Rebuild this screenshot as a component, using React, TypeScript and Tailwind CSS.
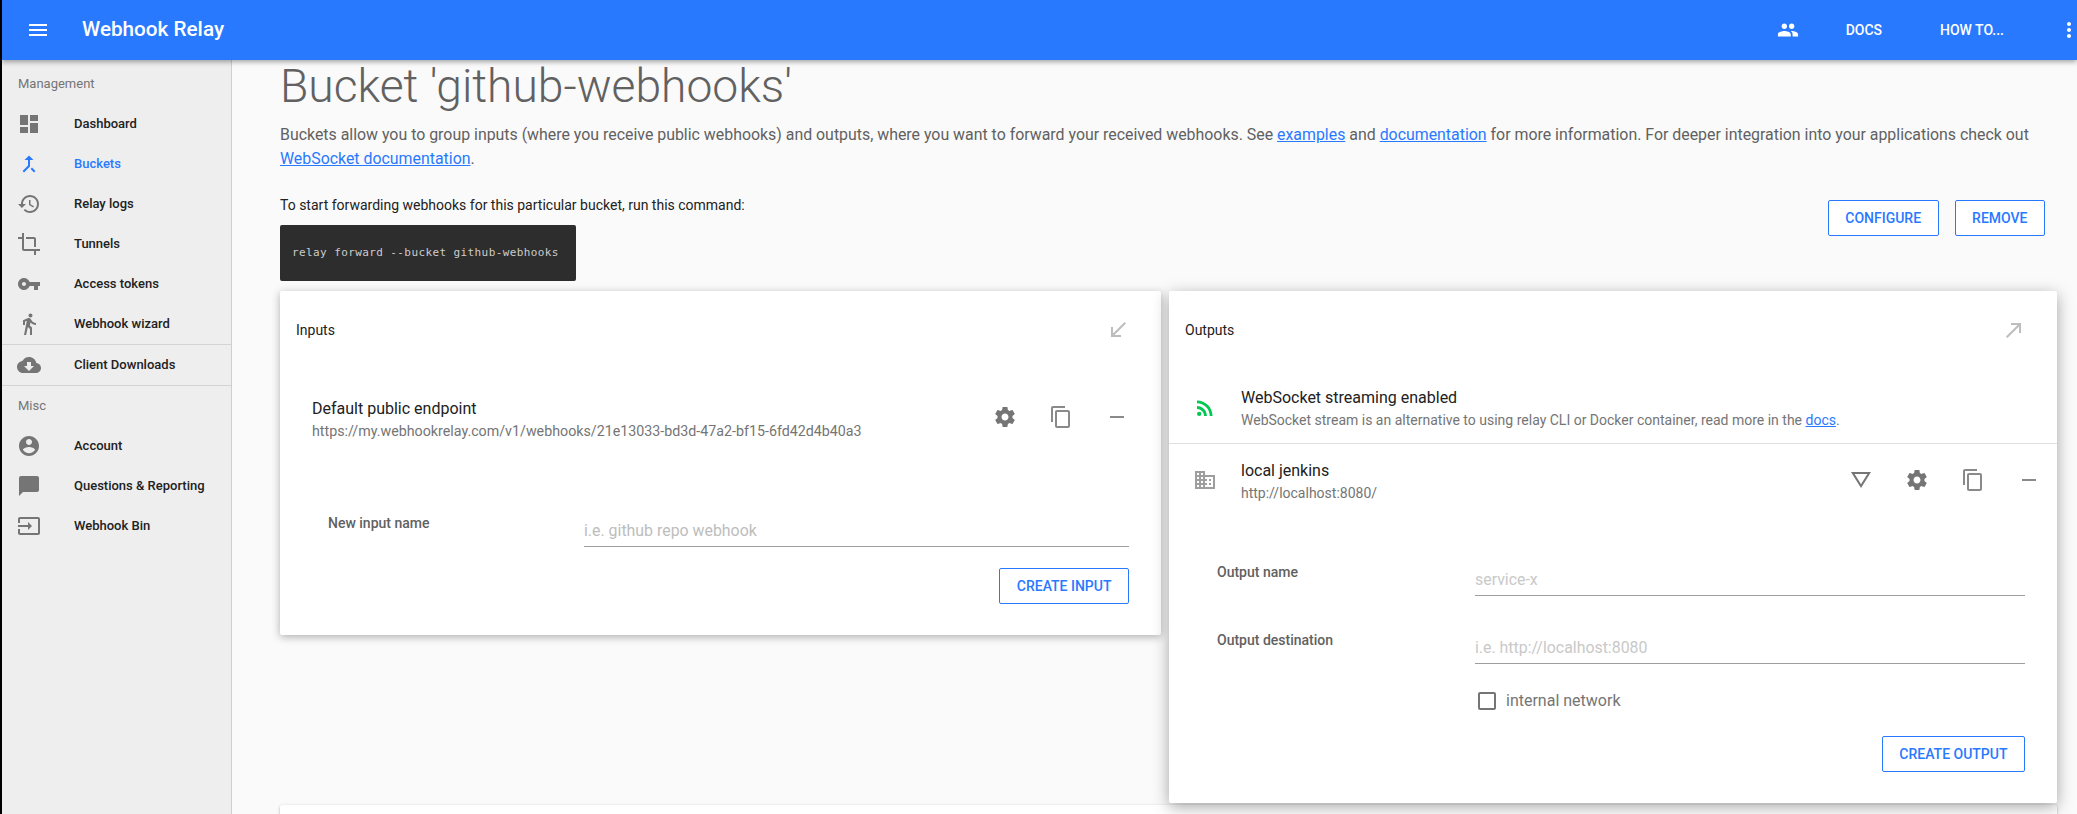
import React from 'react'

const Icon = ({d, className, children}: {d?: string, className?: string, children?: React.ReactNode}) => (
    <svg viewBox="0 0 24 24" fill="currentColor" className={className}>
        {d && <path d={d}/>}
        {children}
    </svg>
)

const paths = {
    menu: "M3 18h18v-2H3v2zm0-5h18v-2H3v2zm0-7v2h18V6H3z",
    dashboard: "M3 13h8V3H3v10zm0 8h8v-6H3v6zm10 0h8V11h-8v10zm0-18v6h8V3h-8z",
    merge: "M17 20.41L18.41 19 15 15.59 13.59 17 17 20.41zM7.5 8H11v5.59L5.59 19 7 20.41l6-6V8h3.5L12 3.5 7.5 8z",
    history: "M13 3c-4.97 0-9 4.03-9 9H1l3.89 3.89.07.14L9 12H6c0-3.87 3.13-7 7-7s7 3.13 7 7-3.13 7-7 7c-1.93 0-3.68-.79-4.94-2.06l-1.42 1.42C8.27 19.99 10.51 21 13 21c4.97 0 9-4.03 9-9s-4.03-9-9-9zm-1 5v5l4.28 2.54.72-1.21-3.5-2.08V8H12z",
    crop: "M17 15h2V7c0-1.1-.9-2-2-2H9v2h8v8zM7 17V1H5v4H1v2h4v10c0 1.1.9 2 2 2h10v4h2v-4h4v-2H7z",
    key: "M12.65 10C11.83 7.67 9.61 6 7 6c-3.31 0-6 2.69-6 6s2.69 6 6 6c2.61 0 4.83-1.67 5.65-4H17v4h4v-4h2v-4H12.65zM7 14c-1.1 0-2-.9-2-2s.9-2 2-2 2 .9 2 2-.9 2-2 2z",
    walk: "M13.5 5.5c1.1 0 2-.9 2-2s-.9-2-2-2-2 .9-2 2 .9 2 2 2zM9.8 8.9L7 23h2.1l1.8-8 2.1 2v6h2v-7.5l-2.1-2 .6-3C14.8 12 16.8 13 19 13v-2c-1.9 0-3.5-1-4.3-2.4l-1-1.6c-.4-.6-1-1-1.7-1-.3 0-.5.1-.8.1L6 8.3V13h2V9.6l1.8-.7",
    cloud: "M19.35 10.04C18.67 6.59 15.64 4 12 4 9.11 4 6.6 5.64 5.35 8.04 2.34 8.36 0 10.91 0 14c0 3.31 2.69 6 6 6h13c2.76 0 5-2.24 5-5 0-2.64-2.05-4.78-4.65-4.96zM17 13l-5 5-5-5h3V9h4v4h3z",
    account: "M12 2C6.48 2 2 6.48 2 12s4.48 10 10 10 10-4.48 10-10S17.52 2 12 2zm0 3c1.66 0 3 1.34 3 3s-1.34 3-3 3-3-1.34-3-3 1.34-3 3-3zm0 14.2c-2.5 0-4.71-1.28-6-3.22.03-1.99 4-3.08 6-3.08 1.99 0 5.97 1.09 6 3.08-1.29 1.94-3.5 3.22-6 3.22z",
    chat: "M20 2H4c-1.1 0-2 .9-2 2v18l4-4h14c1.1 0 2-.9 2-2V4c0-1.1-.9-2-2-2z",
    input: "M21 3.01H3c-1.1 0-2 .9-2 2V9h2V4.99h18v14.03H3V15H1v4.01c0 1.1.9 1.98 2 1.98h18c1.1 0 2-.88 2-1.98v-14c0-1.11-.9-2-2-2zM11 16l4-4-4-4v3H1v2h10v3z",
    people: "M16 11c1.66 0 2.99-1.34 2.99-3S17.66 5 16 5c-1.66 0-3 1.34-3 3s1.34 3 3 3zm-8 0c1.66 0 2.99-1.34 2.99-3S9.66 5 8 5C6.34 5 5 6.34 5 8s1.34 3 3 3zm0 2c-2.33 0-7 1.17-7 3.5V19h14v-2.5c0-2.33-4.67-3.5-7-3.5zm8 0c-.29 0-.62.02-.97.05 1.16.84 1.97 1.97 1.97 3.45V19h6v-2.5c0-2.33-4.67-3.5-7-3.5z",
    more: "M12 8c1.1 0 2-.9 2-2s-.9-2-2-2-2 .9-2 2 .9 2 2 2zm0 2c-1.1 0-2 .9-2 2s.9 2 2 2 2-.9 2-2-.9-2-2-2zm0 6c-1.1 0-2 .9-2 2s.9 2 2 2 2-.9 2-2-.9-2-2-2z",
    settings: "M19.43 12.98c.04-.32.07-.64.07-.98s-.03-.66-.07-.98l2.11-1.65c.19-.15.24-.42.12-.64l-2-3.46c-.12-.22-.39-.3-.61-.22l-2.49 1c-.52-.4-1.08-.73-1.69-.98l-.38-2.65C14.46 2.18 14.25 2 14 2h-4c-.25 0-.46.18-.49.42l-.38 2.65c-.61.25-1.17.59-1.69.98l-2.49-1c-.23-.09-.49 0-.61.22l-2 3.46c-.13.22-.07.49.12.64l2.11 1.65c-.04.32-.07.65-.07.98s.03.66.07.98l-2.11 1.65c-.19.15-.24.42-.12.64l2 3.46c.12.22.39.3.61.22l2.49-1c.52.4 1.08.73 1.69.98l.38 2.65c.03.24.24.42.49.42h4c.25 0 .46-.18.49-.42l.38-2.65c.61-.25 1.17-.59 1.69-.98l2.49 1c.23.09.49 0 .61-.22l2-3.46c.12-.22.07-.49-.12-.64l-2.11-1.65zM12 15.5c-1.93 0-3.5-1.57-3.5-3.5s1.57-3.5 3.5-3.5 3.5 1.57 3.5 3.5-1.57 3.5-3.5 3.5z",
    copy: "M16 1H4c-1.1 0-2 .9-2 2v14h2V3h12V1zm3 4H8c-1.1 0-2 .9-2 2v14c0 1.1.9 2 2 2h11c1.1 0 2-.9 2-2V7c0-1.1-.9-2-2-2zm0 16H8V7h11v14z",
    remove: "M19 13H5v-2h14v2z",
    received: "M20 5.41L18.59 4 7 15.59V9H5v10h10v-2H8.41z",
    made: "M9 5v2h6.59L4 18.59 5.41 20 17 8.41V15h2V5z",
    rss: "M4 4.44v2.83c7.03 0 12.73 5.7 12.73 12.73h2.83c0-8.59-6.97-15.56-15.56-15.56zm0 5.66v2.83c3.9 0 7.07 3.17 7.07 7.07h2.83c0-5.47-4.43-9.9-9.9-9.9z",
    business: "M12 7V3H2v18h20V7H12zM6 19H4v-2h2v2zm0-4H4v-2h2v2zm0-4H4V9h2v2zm0-4H4V5h2v2zm4 12H8v-2h2v2zm0-4H8v-2h2v2zm0-4H8V9h2v2zm0-4H8V5h2v2zm10 12h-8v-2h2v-2h-2v-2h2v-2h-2V9h8v10zm-2-8h-2v2h2v-2zm0 4h-2v2h2v-2z",
    triangle: "M12 7.77L18.39 18H5.61L12 7.77M12 4L2 20h20L12 4z",
    checkbox: "M19 5v14H5V5h14m0-2H5c-1.1 0-2 .9-2 2v14c0 1.1.9 2 2 2h14c1.1 0 2-.9 2-2V5c0-1.1-.9-2-2-2z",
}

const SidebarItem = ({icon, label, active}: {icon: string, label: string, active?: boolean}) => (
    <div className={`flex items-center h-10 pl-[15px] text-[13px] font-medium ${active ? 'text-[#2979ff]' : 'text-[#212121]'}`}>
        <Icon d={icon} className={`w-6 h-6 shrink-0 ${active ? 'text-[#2979ff]' : 'text-[#757575]'}`}/>
        <span className="ml-[33px]">{label}</span>
    </div>
)

const Sidebar = () => (
    <aside className="w-[230px] shrink-0 bg-[#eeeeee] border-r border-[#cfcfcf]">
        <div className="h-11 pt-1 flex items-center pl-4 text-[13px] text-[#757575]">Management</div>
        <SidebarItem icon={paths.dashboard} label="Dashboard"/>
        <SidebarItem icon={paths.merge} label="Buckets" active/>
        <SidebarItem icon={paths.history} label="Relay logs"/>
        <SidebarItem icon={paths.crop} label="Tunnels"/>
        <SidebarItem icon={paths.key} label="Access tokens"/>
        <SidebarItem icon={paths.walk} label="Webhook wizard"/>
        <div className="border-y border-[#d4d4d4]">
            <SidebarItem icon={paths.cloud} label="Client Downloads"/>
        </div>
        <div className="h-10 flex items-center pl-4 text-[13px] text-[#757575]">Misc</div>
        <SidebarItem icon={paths.account} label="Account"/>
        <SidebarItem icon={paths.chat} label="Questions & Reporting"/>
        <SidebarItem icon={paths.input} label="Webhook Bin"/>
    </aside>
)

const OutlineButton = ({children}: {children: React.ReactNode}) => (
    <button className="h-9 px-[16.5px] rounded-[2px] border border-[#2979ff] bg-white text-[#2979ff] text-sm font-medium">
        {children}
    </button>
)

const RowActions = () => (
    <>
        <Icon d={paths.settings} className="w-6 h-6 text-[#757575]"/>
        <Icon d={paths.copy} className="w-6 h-6 text-[#8a8a8a]"/>
        <Icon d={paths.remove} className="w-6 h-6 text-[#8a8a8a]"/>
    </>
)

const Field = ({label, placeholder, labelWidth, color}: {label: string, placeholder: string, labelWidth: string, color: string}) => (
    <div className="flex items-start">
        <div className={`${labelWidth} text-sm leading-5 font-medium text-[#616161]`}>{label}</div>
        <div className={`flex-1 h-[31px] mt-[3px] border-b border-[#9e9e9e] text-[15.9px] leading-[30px] ${color}`}>{placeholder}</div>
    </div>
)

const InputsCard = () => (
    <section className="w-[881px] h-[344px] shrink-0 rounded-[2px] bg-white shadow-[0_2px_8px_rgba(0,0,0,0.3)]">
        <div className="flex items-center justify-between h-[78px] pl-4 pr-[31px] text-sm text-[#212121]">
            <span>Inputs</span>
            <Icon d={paths.received} className="w-6 h-6 text-[#bdbdbd]"/>
        </div>
        <div className="flex items-center mt-[28px] pl-8 pr-[32px]">
            <div className="flex-1">
                <div className="text-base leading-6 text-[#212121]">Default public endpoint</div>
                <div className="text-[14.25px] leading-5 text-[#757575]">https://my.webhookrelay.com/v1/webhooks/21e13033-bd3d-47a2-bf15-6fd42d4b40a3</div>
            </div>
            <div className="flex gap-8 -mt-1">
                <RowActions/>
            </div>
        </div>
        <div className="mt-[72px] pl-[48px] pr-8">
            <Field label="New input name" placeholder="i.e. github repo webhook" labelWidth="w-[256px]" color="text-[#bdbdbd]"/>
            <div className="flex justify-end mt-[21px]">
                <OutlineButton>CREATE INPUT</OutlineButton>
            </div>
        </div>
    </section>
)

const OutputsCard = () => (
    <section className="w-[888px] h-[512px] shrink-0 rounded-[2px] bg-white shadow-[0_4px_16px_rgba(0,0,0,0.35)]">
        <div className="flex items-center justify-between h-[78px] pl-4 pr-[31px] text-sm text-[#212121]">
            <span>Outputs</span>
            <Icon d={paths.made} className="w-6 h-6 text-[#bdbdbd]"/>
        </div>
        <div className="flex items-center h-[75px] pl-6 border-b border-[#e0e0e0]">
            <Icon className="w-6 h-6 mt-1 text-[#00c853]">
                <circle cx="6.18" cy="17.82" r="2.18"/>
                <path d={paths.rss}/>
            </Icon>
            <div className="ml-6 mt-1">
                <div className="text-base leading-6 text-[#212121]">WebSocket streaming enabled</div>
                <div className="text-[14px] leading-5 text-[#757575]">
                    WebSocket stream is an alternative to using relay CLI or Docker container, read more in the <a className="text-[#2979ff] underline">docs</a>.
                </div>
            </div>
        </div>
        <div className="flex items-center h-[72px] pl-6 pr-4">
            <Icon d={paths.business} className="w-6 h-6 text-[#9e9e9e]"/>
            <div className="flex-1 ml-6 mt-[2px]">
                <div className="text-base leading-6 text-[#212121]">local jenkins</div>
                <div className="text-sm leading-5 text-[#757575]">http://localhost:8080/</div>
            </div>
            <div className="flex gap-8">
                <Icon d={paths.triangle} className="w-6 h-6 rotate-180 text-[#757575]"/>
                <RowActions/>
            </div>
        </div>
        <div className="mt-[46px] pl-12 pr-8">
            <Field label="Output name" placeholder="service-x" labelWidth="w-[258px]" color="text-[#c9c9c9]"/>
            <div className="mt-[34px]">
                <Field label="Output destination" placeholder="i.e. http://localhost:8080" labelWidth="w-[258px]" color="text-[#c9c9c9]"/>
            </div>
            <div className="flex items-center ml-[258px] mt-[25px] text-base text-[#757575]">
                <Icon d={paths.checkbox} className="w-6 h-6 text-[#757575]"/>
                <span className="ml-[7px]">internal network</span>
            </div>
            <div className="flex justify-end mt-[23px]">
                <OutlineButton>CREATE OUTPUT</OutlineButton>
            </div>
        </div>
    </section>
)

const App = () => {
    return (
        <div className="flex h-screen overflow-hidden bg-black font-['Roboto',sans-serif]">
            <div className="w-[2px] shrink-0"/>
            <div className="flex-1 min-w-0 flex flex-col">
                <header className="relative z-10 h-[60px] shrink-0 flex items-center bg-[#2979ff] text-white shadow-[0_2px_5px_rgba(0,0,0,0.35)]">
                    <Icon d={paths.menu} className="w-6 h-6 ml-6"/>
                    <span className="ml-8 text-[20.7px] font-medium">Webhook Relay</span>
                    <div className="ml-auto flex items-center text-sm font-medium -mr-1">
                        <Icon d={paths.people} className="w-[22px] h-[22px]"/>
                        <span className="ml-[47px]">DOCS</span>
                        <span className="ml-[58px]">HOW TO...</span>
                        <Icon d={paths.more} className="w-6 h-6 ml-[53px]"/>
                    </div>
                </header>
                <div className="flex-1 min-h-0 flex">
                    <Sidebar/>
                    <main className="flex-1 min-w-0 pl-12 pr-[20px] bg-[#fafafa]">
                        <h1 className="text-[46.2px] leading-[52px] font-light text-[#616161]">Bucket 'github-webhooks'</h1>
                        <p className="mt-[11px] text-[15.9px] leading-6 text-[#616161]">
                            Buckets allow you to group inputs (where you receive public webhooks) and outputs, where you want to forward your received webhooks. See <a className="text-[#2979ff] underline">examples</a> and <a className="text-[#2979ff] underline">documentation</a> for more information. For deeper integration into your applications check out <a className="text-[#2979ff] underline">WebSocket documentation</a>.
                        </p>
                        <div className="flex justify-between mt-6">
                            <div>
                                <div className="text-sm leading-5 text-[#212121]">To start forwarding webhooks for this particular bucket, run this command:</div>
                                <pre className="w-[296px] h-[56px] mt-[10px] rounded-[2px] bg-[#2d2d2d] pl-3 leading-[56px] text-[11px] tracking-[0.4px] text-[#cccccc] font-['DejaVu_Sans_Mono',monospace]">relay forward --bucket github-webhooks</pre>
                            </div>
                            <div className="flex gap-4 pr-3 mt-[5px] h-9">
                                <OutlineButton>CONFIGURE</OutlineButton>
                                <OutlineButton>REMOVE</OutlineButton>
                            </div>
                        </div>
                        <div className="flex items-start gap-2 mt-[10px]">
                            <InputsCard/>
                            <OutputsCard/>
                        </div>
                        <div className="h-10 mt-[2px] rounded-[2px] bg-white shadow-[0_1px_3px_rgba(0,0,0,0.3)]"/>
                    </main>
                </div>
            </div>
        </div>
    )
}

export default App
